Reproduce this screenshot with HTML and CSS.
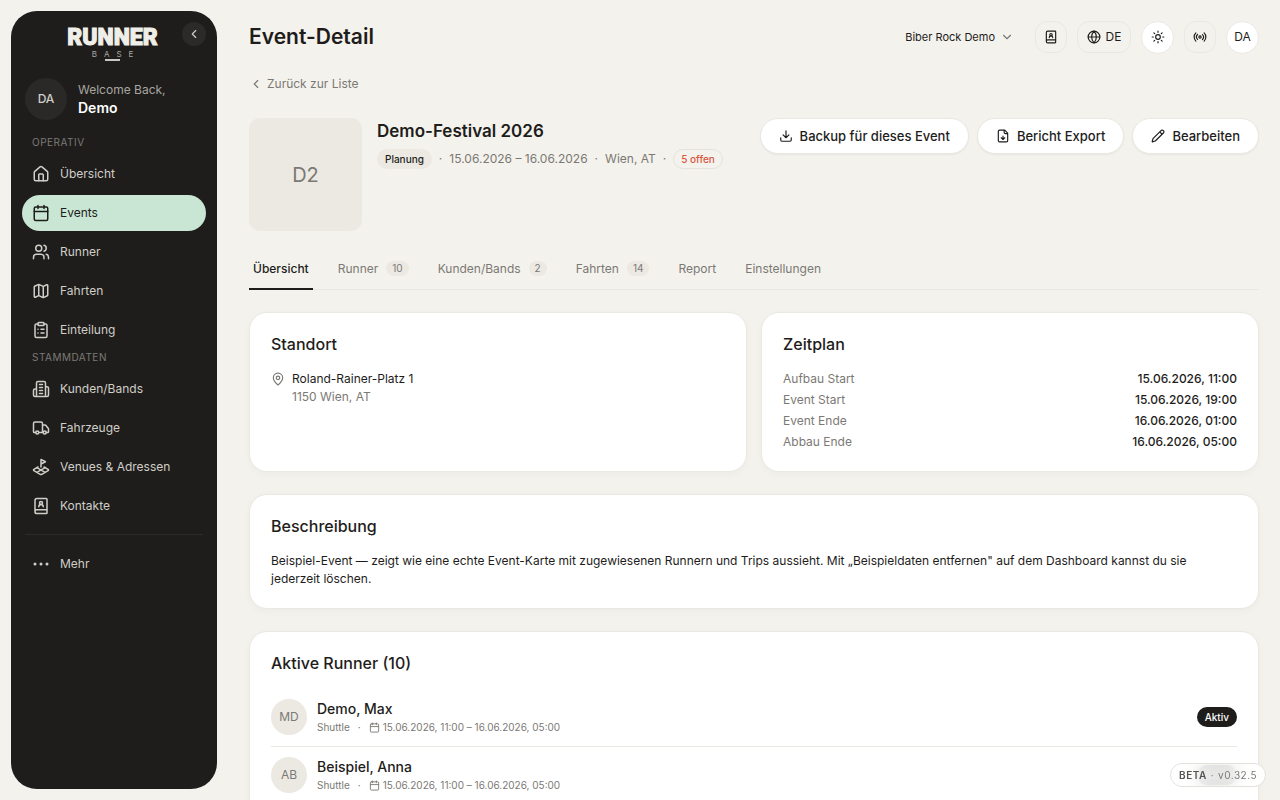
FILE: index.html
```html
<!DOCTYPE html>
<html lang="de">
<head>
  <meta charset="UTF-8">
  <meta name="viewport" content="width=device-width, initial-scale=1">
  <title>Event-Detail</title>
  <link rel="stylesheet" href="styles.css">
</head>
<body>
  <svg class="sprite" aria-hidden="true">
    <symbol id="i-left" viewBox="0 0 24 24"><path d="m15 18-6-6 6-6"/></symbol>
    <symbol id="i-down" viewBox="0 0 24 24"><path d="m6 9 6 6 6-6"/></symbol>
    <symbol id="i-house" viewBox="0 0 24 24"><path d="M15 21v-8a1 1 0 0 0-1-1h-4a1 1 0 0 0-1 1v8"/><path d="M3 10a2 2 0 0 1 .709-1.528l7-5.999a2 2 0 0 1 2.582 0l7 5.999A2 2 0 0 1 21 10v9a2 2 0 0 1-2 2H5a2 2 0 0 1-2-2z"/></symbol>
    <symbol id="i-calendar" viewBox="0 0 24 24"><path d="M8 2v4M16 2v4M3 10h18"/><rect x="3" y="4" width="18" height="18" rx="2"/></symbol>
    <symbol id="i-users" viewBox="0 0 24 24"><path d="M16 21v-2a4 4 0 0 0-4-4H6a4 4 0 0 0-4 4v2"/><circle cx="9" cy="7" r="4"/><path d="M22 21v-2a4 4 0 0 0-3-3.87M16 3.13a4 4 0 0 1 0 7.75"/></symbol>
    <symbol id="i-map" viewBox="0 0 24 24"><path d="M14.106 5.553a2 2 0 0 0 1.788 0l3.659-1.83A1 1 0 0 1 21 4.619v12.764a1 1 0 0 1-.553.894l-4.553 2.277a2 2 0 0 1-1.788 0l-4.212-2.106a2 2 0 0 0-1.788 0l-3.659 1.83A1 1 0 0 1 3 19.381V6.618a1 1 0 0 1 .553-.894l4.553-2.277a2 2 0 0 1 1.788 0zM15 5.764v15M9 3.236v15"/></symbol>
    <symbol id="i-clipboard" viewBox="0 0 24 24"><rect x="8" y="2" width="8" height="4" rx="1"/><path d="M16 4h2a2 2 0 0 1 2 2v14a2 2 0 0 1-2 2H6a2 2 0 0 1-2-2V6a2 2 0 0 1 2-2h2M12 11h4M12 16h4M8 11h.01M8 16h.01"/></symbol>
    <symbol id="i-building" viewBox="0 0 24 24"><path d="M6 22V4a2 2 0 0 1 2-2h8a2 2 0 0 1 2 2v18ZM6 12H4a2 2 0 0 0-2 2v6a2 2 0 0 0 2 2h2M18 9h2a2 2 0 0 1 2 2v9a2 2 0 0 1-2 2h-2M10 6h4M10 10h4M10 14h4M10 18h4"/></symbol>
    <symbol id="i-truck" viewBox="0 0 24 24"><path d="M14 18V6a2 2 0 0 0-2-2H4a2 2 0 0 0-2 2v11a1 1 0 0 0 1 1h2M15 18H9M19 18h2a1 1 0 0 0 1-1v-3.65a1 1 0 0 0-.22-.624l-3.48-4.35A1 1 0 0 0 17.52 8H14"/><circle cx="17" cy="18" r="2"/><circle cx="7" cy="18" r="2"/></symbol>
    <symbol id="i-plot" viewBox="0 0 24 24"><path d="m12 8 6-3-6-3v10M8 11.99l-5.5 3.14a1 1 0 0 0 0 1.74l8.5 4.86a2 2 0 0 0 2 0l8.5-4.86a1 1 0 0 0 0-1.74L16 12M6.49 12.85l11.02 6.3M17.51 12.85 6.5 19.15"/></symbol>
    <symbol id="i-contact" viewBox="0 0 24 24"><path d="M15 13a3 3 0 1 0-6 0M4 19.5v-15A2.5 2.5 0 0 1 6.5 2H19a1 1 0 0 1 1 1v18a1 1 0 0 1-1 1H6.5a1 1 0 0 1 0-5H20"/><circle cx="12" cy="8" r="2"/></symbol>
    <symbol id="i-more" viewBox="0 0 24 24"><circle cx="12" cy="12" r="1"/><circle cx="20" cy="12" r="1"/><circle cx="4" cy="12" r="1"/></symbol>
    <symbol id="i-globe" viewBox="0 0 24 24"><circle cx="12" cy="12" r="10"/><path d="M12 2a14.5 14.5 0 0 0 0 20 14.5 14.5 0 0 0 0-20M2 12h20"/></symbol>
    <symbol id="i-sun" viewBox="0 0 24 24"><circle cx="12" cy="12" r="4"/><path d="M12 2v2M12 20v2M4.93 4.93l1.41 1.41M17.66 17.66l1.41 1.41M2 12h2M20 12h2M6.34 17.66l-1.41 1.41M19.07 4.93l-1.41 1.41"/></symbol>
    <symbol id="i-radio" viewBox="0 0 24 24"><path d="M4.9 19.1C1 15.2 1 8.8 4.9 4.9M7.8 16.2c-2.3-2.3-2.3-6.1 0-8.5M16.2 7.8c2.3 2.3 2.3 6.1 0 8.5M19.1 4.9C23 8.8 23 15.1 19.1 19"/><circle cx="12" cy="12" r="2"/></symbol>
    <symbol id="i-download" viewBox="0 0 24 24"><path d="M12 15V3M21 15v4a2 2 0 0 1-2 2H5a2 2 0 0 1-2-2v-4M7 10l5 5 5-5"/></symbol>
    <symbol id="i-file" viewBox="0 0 24 24"><path d="M15 2H6a2 2 0 0 0-2 2v16a2 2 0 0 0 2 2h12a2 2 0 0 0 2-2V7ZM14 2v4a2 2 0 0 0 2 2h4M12 18v-6M9 15l3 3 3-3"/></symbol>
    <symbol id="i-pencil" viewBox="0 0 24 24"><path d="M21.174 6.812a1 1 0 0 0-3.986-3.987L3.842 16.174a2 2 0 0 0-.5.83l-1.321 4.352a.5.5 0 0 0 .623.622l4.353-1.32a2 2 0 0 0 .83-.497zM15 5l4 4"/></symbol>
    <symbol id="i-pin" viewBox="0 0 24 24"><path d="M20 10c0 4.993-5.539 10.193-7.399 11.799a1 1 0 0 1-1.202 0C9.539 20.193 4 14.993 4 10a8 8 0 0 1 16 0"/><circle cx="12" cy="10" r="3"/></symbol>
  </svg>

  <div class="app">
    <aside class="sidebar">
      <div class="brand">
        <span class="brand-name">RUNNER</span>
        <span class="brand-sub">BASE</span>
      </div>
      <button class="collapse" aria-label="Menü einklappen"><svg class="icon"><use href="#i-left"/></svg></button>

      <div class="user">
        <span class="user-avatar">DA</span>
        <div>
          <div class="user-hello">Welcome Back,</div>
          <div class="user-name">Demo</div>
        </div>
      </div>

      <nav class="nav">
        <div class="nav-label">OPERATIV</div>
        <a class="nav-item" href="#"><svg class="icon"><use href="#i-house"/></svg>Übersicht</a>
        <a class="nav-item active" href="#"><svg class="icon"><use href="#i-calendar"/></svg>Events</a>
        <a class="nav-item" href="#"><svg class="icon"><use href="#i-users"/></svg>Runner</a>
        <a class="nav-item" href="#"><svg class="icon"><use href="#i-map"/></svg>Fahrten</a>
        <a class="nav-item" href="#"><svg class="icon"><use href="#i-clipboard"/></svg>Einteilung</a>
        <div class="nav-label">STAMMDATEN</div>
        <a class="nav-item" href="#"><svg class="icon"><use href="#i-building"/></svg>Kunden/Bands</a>
        <a class="nav-item" href="#"><svg class="icon"><use href="#i-truck"/></svg>Fahrzeuge</a>
        <a class="nav-item" href="#"><svg class="icon"><use href="#i-plot"/></svg>Venues &amp; Adressen</a>
        <a class="nav-item" href="#"><svg class="icon"><use href="#i-contact"/></svg>Kontakte</a>
        <hr class="nav-line">
        <button class="nav-item"><svg class="icon"><use href="#i-more"/></svg>Mehr</button>
      </nav>
    </aside>

    <main class="main">
      <header class="topbar">
        <h1 class="page-title">Event-Detail</h1>
        <div class="tools">
          <button class="org">Biber Rock Demo<svg class="icon"><use href="#i-down"/></svg></button>
          <button class="tool" aria-label="Kontakte"><svg class="icon"><use href="#i-contact"/></svg></button>
          <button class="tool tool-lang"><svg class="icon"><use href="#i-globe"/></svg>DE</button>
          <button class="tool tool-white" aria-label="Design"><svg class="icon"><use href="#i-sun"/></svg></button>
          <button class="tool" aria-label="Live"><svg class="icon"><use href="#i-radio"/></svg></button>
          <button class="tool tool-white">DA</button>
        </div>
      </header>

      <a class="back" href="#"><svg class="icon"><use href="#i-left"/></svg>Zurück zur Liste</a>

      <section class="event">
        <div class="event-tile">D2</div>
        <div class="event-info">
          <h2 class="event-title">Demo-Festival 2026</h2>
          <div class="event-meta">
            <span class="badge badge-soft">Planung</span>
            <span>·</span>
            <span>15.06.2026 – 16.06.2026</span>
            <span>·</span>
            <span>Wien, AT</span>
            <span>·</span>
            <span class="badge badge-open">5 offen</span>
          </div>
        </div>
        <div class="actions">
          <button class="btn"><svg class="icon"><use href="#i-download"/></svg>Backup für dieses Event</button>
          <button class="btn"><svg class="icon"><use href="#i-file"/></svg>Bericht Export</button>
          <button class="btn"><svg class="icon"><use href="#i-pencil"/></svg>Bearbeiten</button>
        </div>
      </section>

      <nav class="tabs">
        <a class="tab active" href="#">Übersicht</a>
        <a class="tab" href="#">Runner<span class="count">10</span></a>
        <a class="tab" href="#">Kunden/Bands<span class="count">2</span></a>
        <a class="tab" href="#">Fahrten<span class="count">14</span></a>
        <a class="tab" href="#">Report</a>
        <a class="tab" href="#">Einstellungen</a>
      </nav>

      <div class="cards">
        <section class="card">
          <h3 class="card-title">Standort</h3>
          <div class="place">
            <svg class="icon"><use href="#i-pin"/></svg>
            <div>
              <div>Roland-Rainer-Platz 1</div>
              <div class="muted">1150 Wien, AT</div>
            </div>
          </div>
        </section>
        <section class="card">
          <h3 class="card-title">Zeitplan</h3>
          <dl class="times">
            <div class="time"><dt>Aufbau Start</dt><dd>15.06.2026, 11:00</dd></div>
            <div class="time"><dt>Event Start</dt><dd>15.06.2026, 19:00</dd></div>
            <div class="time"><dt>Event Ende</dt><dd>16.06.2026, 01:00</dd></div>
            <div class="time"><dt>Abbau Ende</dt><dd>16.06.2026, 05:00</dd></div>
          </dl>
        </section>
        <section class="card wide">
          <h3 class="card-title">Beschreibung</h3>
          <p class="text">Beispiel-Event — zeigt wie eine echte Event-Karte mit zugewiesenen Runnern und Trips aussieht. Mit „Beispieldaten entfernen" auf dem Dashboard kannst du sie jederzeit löschen.</p>
        </section>
        <section class="card wide">
          <h3 class="card-title">Aktive Runner (10)</h3>
          <ul class="runners">
            <li class="runner">
              <span class="avatar">MD</span>
              <div class="runner-info">
                <div class="runner-name">Demo, Max</div>
                <div class="runner-meta"><span>Shuttle</span><span>·</span><span class="range"><svg class="icon"><use href="#i-calendar"/></svg>15.06.2026, 11:00 – 16.06.2026, 05:00</span></div>
              </div>
              <span class="badge badge-dark">Aktiv</span>
            </li>
            <li class="runner">
              <span class="avatar">AB</span>
              <div class="runner-info">
                <div class="runner-name">Beispiel, Anna</div>
                <div class="runner-meta"><span>Shuttle</span><span>·</span><span class="range"><svg class="icon"><use href="#i-calendar"/></svg>15.06.2026, 11:00 – 16.06.2026, 05:00</span></div>
              </div>
              <span class="badge badge-dark">Aktiv</span>
            </li>
          </ul>
        </section>
      </div>
    </main>
  </div>

  <div class="version"><strong>BETA</strong><span>·</span><span>v0.32.5</span></div>
</body>
</html>
```
FILE: styles.css
```css
* {
  box-sizing: border-box;
}
body {
  margin: 0;
  background: #f4f2ed;
  color: #1e1d1b;
  font-family: Inter, "Liberation Sans", sans-serif;
  font-size: 12px;
  line-height: 18px;
}
h1, h2, h3, p, ul, dl, dd {
  margin: 0;
  padding: 0;
}
a {
  color: inherit;
  text-decoration: none;
}
button {
  font: inherit;
  color: inherit;
  background: none;
  border: 0;
  padding: 0;
  cursor: pointer;
}
.sprite {
  display: none;
}
.icon {
  width: 14px;
  height: 14px;
  flex: none;
  fill: none;
  stroke: currentColor;
  stroke-width: 2;
  stroke-linecap: round;
  stroke-linejoin: round;
}
.muted {
  color: #7b7974;
}

.app {
  display: flex;
  height: 100vh;
}

/* sidebar */
.sidebar {
  position: relative;
  flex: none;
  width: 206px;
  margin: 11px 0 11px 11px;
  padding: 15px 11px;
  border-radius: 26px;
  background: #1e1d1b;
  color: #d0cec8;
}
.brand {
  display: flex;
  flex-direction: column;
  align-items: center;
  height: 36px;
  padding-right: 3px;
  color: #f0eee8;
}
.brand-name {
  font-family: Roboto, "Liberation Sans", sans-serif;
  font-size: 23px;
  font-weight: 900;
  line-height: 24px;
  -webkit-text-stroke: 1px #f0eee8;
}
.brand-sub {
  font-size: 8px;
  line-height: 8px;
  letter-spacing: 7px;
  padding-left: 7px;
  color: #aaa8a2;
}
.brand::after {
  content: "";
  width: 15px;
  height: 2px;
  margin-top: 1px;
  background: #c8c6c0;
}
.collapse {
  position: absolute;
  top: 11px;
  right: 11px;
  width: 24px;
  height: 24px;
  display: grid;
  place-items: center;
  border-radius: 50%;
  background: #2c2a28;
}
.user {
  display: flex;
  align-items: center;
  gap: 11px;
  padding: 16px 3px;
}
.user-avatar {
  width: 42px;
  height: 42px;
  display: grid;
  place-items: center;
  border-radius: 50%;
  background: #2b2927;
  font-weight: 500;
}
.user-hello {
  color: #a8a6a0;
}
.user-name {
  color: #fff;
  font-size: 14px;
  font-weight: 600;
}
.nav {
  display: flex;
  flex-direction: column;
  gap: 3px;
}
.nav-label {
  margin-bottom: 5px;
  padding-left: 10px;
  font-size: 10px;
  line-height: 12px;
  letter-spacing: 0.5px;
  color: #7c7a75;
}
.nav-item {
  display: flex;
  align-items: center;
  gap: 10px;
  height: 36px;
  padding: 0 10px;
  border-radius: 18px;
}
.nav-item .icon {
  width: 18px;
  height: 18px;
}
.nav-item.active {
  background: #c8e6d3;
  color: #1e1d1b;
}
.nav-line {
  width: calc(100% - 6px);
  margin: 7px 3px 8px;
  border: 0;
  border-top: 1px solid #2d2b29;
}

/* page */
.main {
  flex: 1;
  min-width: 0;
  padding: 20px 21px 20px 32px;
  overflow-y: auto;
  scrollbar-width: none;
}
.topbar {
  display: flex;
  align-items: center;
  justify-content: space-between;
  height: 34px;
}
.page-title {
  font-size: 21px;
  font-weight: 600;
  line-height: 28px;
}
.tools {
  display: flex;
  align-items: center;
  gap: 10px;
}
.org {
  display: flex;
  align-items: center;
  gap: 5px;
  margin-right: 11px;
  font-size: 11px;
}
.org .icon {
  color: #7b7974;
}
.tool {
  display: flex;
  align-items: center;
  justify-content: center;
  gap: 5px;
  width: 32px;
  height: 32px;
  border: 1px solid #eae8e3;
  border-radius: 12px;
}
.tool-lang {
  width: 54px;
}
.tool-white {
  width: 33px;
  height: 33px;
  border-radius: 50%;
  background: #fff;
}
.back {
  display: inline-flex;
  align-items: center;
  gap: 4px;
  margin-top: 21px;
  color: #7b7974;
}
.event {
  display: flex;
  gap: 15px;
  margin-top: 22px;
}
.event-tile {
  width: 113px;
  height: 113px;
  display: grid;
  place-items: center;
  border-radius: 11px;
  background: #ece9e3;
  color: #7b7974;
  font-size: 20px;
}
.event-info {
  flex: 1;
}
.event-title {
  font-size: 17px;
  font-weight: 600;
  line-height: 26px;
}
.event-meta {
  display: flex;
  align-items: center;
  gap: 7px;
  margin-top: 5px;
  color: #7b7974;
}
.badge {
  padding: 0 7px;
  border: 1px solid transparent;
  border-radius: 10px;
  font-size: 10px;
  font-weight: 500;
}
.badge-soft {
  background: #ece9e3;
  color: #1e1d1b;
}
.badge-open {
  border-color: #e6e3dd;
  color: #d9573f;
}
.badge-dark {
  background: #1e1d1b;
  color: #fff;
}
.actions {
  display: flex;
  align-items: flex-start;
  gap: 8px;
}
.btn {
  display: flex;
  align-items: center;
  gap: 7px;
  height: 36px;
  padding: 0 18px;
  border: 1px solid #eae8e3;
  border-radius: 18px;
  background: #fff;
  box-shadow: 0 1px 2px rgba(0, 0, 0, 0.05);
  font-size: 13px;
  font-weight: 500;
}
.tabs {
  display: flex;
  gap: 21px;
  margin-top: 18px;
  border-bottom: 1px solid #eae8e3;
}
.tab {
  display: flex;
  align-items: center;
  gap: 8px;
  height: 41px;
  margin-bottom: -1px;
  padding: 0 4px;
  border-bottom: 2px solid transparent;
  color: #7b7974;
}
.tab.active {
  border-color: #1e1d1b;
  color: #1e1d1b;
  font-weight: 500;
}
.count {
  padding: 0 6px;
  border-radius: 8px;
  background: #ece9e3;
  font-size: 10px;
  line-height: 15px;
}

/* cards */
.cards {
  display: grid;
  grid-template-columns: 1fr 1fr;
  gap: 22px 14px;
  margin-top: 22px;
}
.card {
  padding: 20px 21px;
  border: 1px solid #eae8e3;
  border-radius: 18px;
  background: #fff;
  box-shadow: 0 2px 8px rgba(0, 0, 0, 0.03);
}
.wide {
  grid-column: 1 / -1;
}
.card-title {
  margin-bottom: 15px;
  font-size: 16px;
  font-weight: 500;
  line-height: 22px;
}
.place {
  display: flex;
  gap: 7px;
}
.place .icon {
  margin-top: 2px;
  color: #7b7974;
}
.times {
  display: grid;
  gap: 3px;
}
.time {
  display: flex;
  justify-content: space-between;
}
.time dt {
  color: #7b7974;
}
.time dd {
  font-weight: 500;
}
.text {
  padding-right: 21px;
}
.runners {
  list-style: none;
}
.runner {
  display: flex;
  align-items: center;
  gap: 10px;
  padding: 8px 0 10px;
}
.runner + .runner {
  border-top: 1px solid #eae8e3;
}
.avatar {
  width: 36px;
  height: 36px;
  display: grid;
  place-items: center;
  border-radius: 50%;
  background: #ece9e3;
  color: #7b7974;
}
.runner-info {
  flex: 1;
  padding-top: 3px;
}
.runner-name {
  font-size: 14px;
  font-weight: 500;
}
.runner-meta {
  display: flex;
  gap: 8px;
  font-size: 10px;
  color: #7b7974;
}
.range {
  display: flex;
  align-items: center;
  gap: 3px;
}
.range .icon {
  width: 11px;
  height: 11px;
}

.version {
  position: fixed;
  right: 14px;
  bottom: 13px;
  display: flex;
  gap: 4px;
  padding: 2px 8px;
  border: 1px solid #e3e1dc;
  border-radius: 12px;
  background: rgba(255, 255, 255, 0.85);
  backdrop-filter: blur(8px);
  font-size: 10px;
  letter-spacing: 0.5px;
  color: #7b7974;
}
.version strong {
  font-weight: 600;
  color: #55534f;
}
```
